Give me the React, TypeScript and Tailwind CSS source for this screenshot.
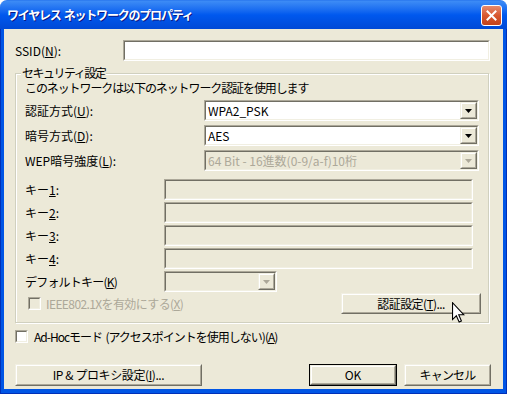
import type { ReactNode } from "react";

const FONT = { fontFamily: "'Noto Sans CJK JP', 'Liberation Sans', sans-serif" };

// classic 3D sunken edge (text boxes, combos, checkboxes)
const Sunken = ({
    className = "",
    inner = "bg-white",
    children,
}: {
    className?: string;
    inner?: string;
    children?: ReactNode;
}) => (
    <div
        className={`border border-t-[#ACA899] border-l-[#ACA899] border-r-white border-b-white ${className}`}
    >
        <div
            className={`h-full w-full border border-t-[#716F64] border-l-[#716F64] border-r-[#F1EFE2] border-b-[#F1EFE2] ${inner}`}
        >
            {children}
        </div>
    </div>
);

const Raised = ({ className = "", children }: { className?: string; children?: ReactNode }) => (
    <div
        className={`border border-t-[#F1EFE2] border-l-[#F1EFE2] border-r-[#716F64] border-b-[#716F64] bg-[#ECE9D8] ${className}`}
    >
        <div className="h-full w-full border border-t-white border-l-white border-r-[#ACA899] border-b-[#ACA899] flex items-center justify-center">
            {children}
        </div>
    </div>
);

const Arrow = ({ disabled = false }: { disabled?: boolean }) => (
    <Raised className="w-[17px] h-full shrink-0">
        <svg width="7" height="4" viewBox="0 0 7 4">
            <polygon points="0,0 7,0 3.5,4" fill={disabled ? "#ACA899" : "#000"} />
        </svg>
    </Raised>
);

const Combo = ({
    value,
    width,
    disabled = false,
}: {
    value: string;
    width: string;
    disabled?: boolean;
}) => (
    <Sunken className={`h-[21px] ${width}`} inner={disabled ? "bg-[#ECE9D8]" : "bg-white"}>
        <div className="flex h-full">
            <span
                className={`flex-1 pl-[2px] leading-[17px] whitespace-nowrap overflow-hidden ${
                    disabled ? "text-[#ACA899]" : "text-black"
                }`}
            >
                {value}
            </span>
            <Arrow disabled={disabled} />
        </div>
    </Sunken>
);

const Box = ({ disabled = false }: { disabled?: boolean }) => (
    <Sunken className="w-[13px] h-[13px] shrink-0" inner={disabled ? "bg-[#ECE9D8]" : "bg-white"} />
);

const App = () => {
    return (
        <div className="relative w-[507px] h-[394px] flex flex-col text-[12px] text-black" style={FONT}>
            {/* title bar */}
            <div className="h-[29px] shrink-0 rounded-t-[7px] bg-gradient-to-b from-[#3D8CF5] via-[#0058EE] to-[#0049D6] flex items-center pl-[7px] pr-[5px] border-t border-[#2F7DF0]">
                <span className="text-white font-bold text-[12px] tracking-[-1.2px] [text-shadow:1px_1px_0_#0A1883] whitespace-pre">
                    ワイヤレス  ネットワークのプロパティ
                </span>
                <div className="ml-auto w-[21px] h-[21px] rounded-[3px] border border-white bg-gradient-to-b from-[#E58A6D] via-[#D8582F] to-[#C4421A] flex items-center justify-center">
                    <svg width="11" height="11" viewBox="0 0 11 11">
                        <path d="M1.5 1.5 L9.5 9.5 M9.5 1.5 L1.5 9.5" stroke="#fff" strokeWidth="2" strokeLinecap="square" />
                    </svg>
                </div>
            </div>

            {/* frame + body */}
            <div className="flex-1 flex bg-[#0055E5] px-[3px] pb-[4px] border-l border-r border-b border-[#0030B8]">
                <div className="flex-1 bg-[#ECE9D8] flex flex-col pl-[11px] pt-[11px]">
                    <div className="flex items-center h-[21px]">
                        <span className="w-[108px]">
                            SSID(<u>N</u>):
                        </span>
                        <Sunken className="w-[367px] h-[21px]" />
                    </div>

                    {/* security group */}
                    <div className="relative mt-[12px] w-[474px] h-[250px] border border-[#D0D0BF] shadow-[inset_1px_1px_0_#fff,1px_1px_0_#fff] pl-[9px] pt-[8px] flex flex-col">
                        <span className="absolute left-[5px] top-[-7px] bg-[#ECE9D8] px-[1px] leading-[12px] tracking-[-1.5px]">
                            セキュリティ設定
                        </span>
                        <div className="h-[13px] leading-[12px] tracking-[-1.1px] whitespace-nowrap">
                            このネットワークは以下のネットワーク認証を使用します
                        </div>

                        <div className="flex items-center mt-[5px]">
                            <span className="w-[179px]">
                                認証方式(<u>U</u>):
                            </span>
                            <Combo value="WPA2_PSK" width="w-[275px]" />
                        </div>
                        <div className="flex items-center mt-[4px]">
                            <span className="w-[179px]">
                                暗号方式(<u>D</u>):
                            </span>
                            <Combo value="AES" width="w-[275px]" />
                        </div>
                        <div className="flex items-center mt-[4px]">
                            <span className="w-[179px]">
                                WEP暗号強度(<u>L</u>):
                            </span>
                            <Combo value="64 Bit - 16進数(0-9/a-f)10桁" width="w-[275px]" disabled />
                        </div>

                        {["1", "2", "3", "4"].map((k, i) => (
                            <div key={k} className={`flex items-center ${i === 0 ? "mt-[8px]" : "mt-[2px]"}`}>
                                <span className="w-[139px]">
                                    キー<u>{k}</u>:
                                </span>
                                <Sunken className="w-[309px] h-[21px]" inner="bg-[#ECE9D8]" />
                            </div>
                        ))}
                        <div className="flex items-center mt-[2px]">
                            <span className="w-[139px] tracking-[-0.8px]">
                                デフォルトキー(<u>K</u>)
                            </span>
                            <Combo value="" width="w-[113px]" disabled />
                        </div>

                        <div className="flex items-center mt-[1px] w-[456px]">
                            <div className="flex items-center pl-[3px] gap-[5px] text-[#ACA899]">
                                <Box disabled />
                                <span className="tracking-[-0.6px]">
                                    IEEE802.1Xを有効にする(<u>X</u>)
                                </span>
                            </div>
                            <Raised className="ml-auto w-[140px] h-[21px]">
                                <span className="tracking-[-0.6px]">認証設定(<u>T</u>)...</span>
                            </Raised>
                        </div>
                    </div>

                    <div className="flex items-center mt-[7px] h-[13px]">
                        <Box />
                        <span className="ml-[6px] tracking-[-1px] whitespace-pre">
                            Ad-Hocモード  (アクセスポイントを使用しない)(<u>A</u>)
                        </span>
                    </div>

                    <div className="flex items-center mt-[21px] h-[22px]">
                        <Raised className="w-[187px] h-[22px]">
                            <span className="tracking-[-0.4px] whitespace-pre">
                                IP &amp; プロキシ設定(<u>I</u>)...
                            </span>
                        </Raised>
                        <div className="ml-[107px] w-[88px] h-[22px] border border-black">
                            <Raised className="w-full h-full">OK</Raised>
                        </div>
                        <Raised className="ml-[7px] w-[87px] h-[22px]">
                            <span className="tracking-[-0.8px]">キャンセル</span>
                        </Raised>
                    </div>
                </div>
            </div>

            {/* mouse pointer over 認証設定 */}
            <svg className="absolute left-[452px] top-[302px]" width="13" height="21" viewBox="0 0 12 19">
                <path d="M0.5 0.5 L0.5 16 L4 12.5 L6.6 18.3 L8.7 17.4 L6.2 11.6 L11 11.6 Z" fill="#fff" stroke="#000" strokeWidth="1" />
            </svg>
        </div>
    );
};

export default App;
